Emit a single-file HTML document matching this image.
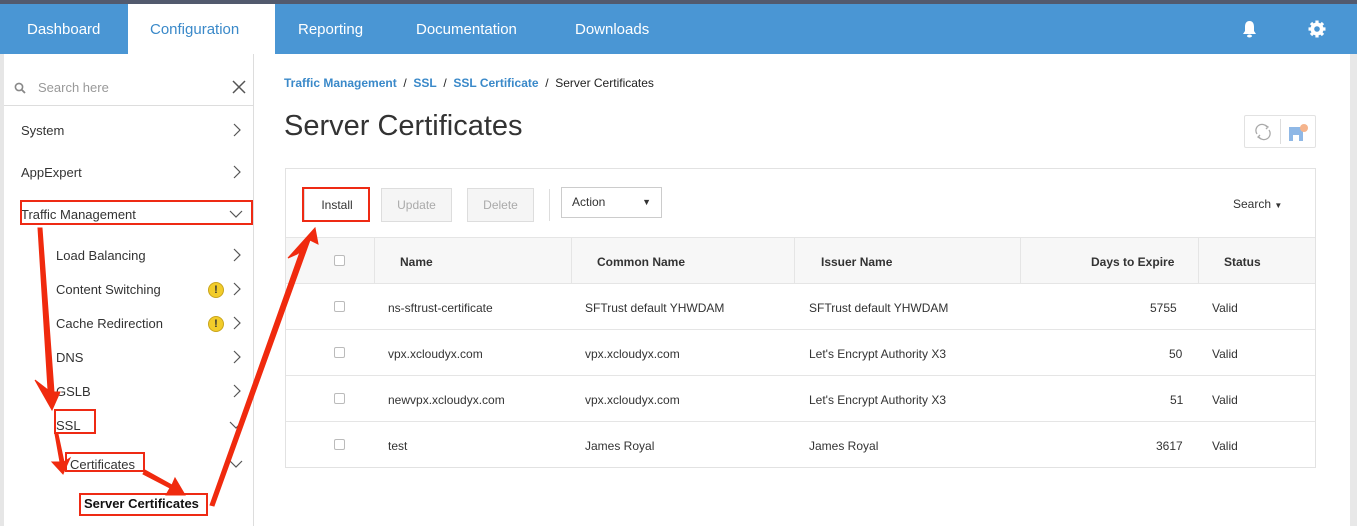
<!DOCTYPE html>
<html><head><style>
*{box-sizing:border-box;margin:0;padding:0}
body{width:1357px;height:526px;overflow:hidden;background:#fff;font-family:"Liberation Sans",sans-serif;position:relative;color:#222}
.top{position:absolute;left:0;top:0;width:1357px;height:4px;background:#525a6e}
.nav{position:absolute;left:0;top:4px;width:1357px;height:50px;background:#4a96d4}
.nav span{position:absolute;top:17px;color:#fff;font-size:15px}
.nav .act{background:#fff;color:#3a89c9;top:0;height:50px;line-height:51px;padding:0 22px;left:128px;width:147px}
.side{position:absolute;left:0;top:54px;width:254px;height:472px;border-right:1px solid #ddd;border-left:4px solid #e6e6e6}
.srch{position:absolute;left:4px;top:70px;width:250px;height:36px;border-bottom:1px solid #ddd;font-size:13px;color:#999}
.it{position:absolute;font-size:13px;color:#333}
.chev{position:absolute}
.warn{position:absolute;width:16px;height:16px;border-radius:50%;background:#f2cc2a;border:1px solid #c9a51c;font-size:11px;font-weight:bold;text-align:center;line-height:14px;color:#333}
.bc{position:absolute;left:284px;top:76px;font-size:12px;color:#222}
.bc b{color:#3a89c9;font-weight:bold}
h1{position:absolute;left:284px;top:110px;font-size:29px;font-weight:normal;color:#333}
.tb{position:absolute;left:285px;top:168px;width:1031px;height:300px;border:1px solid #e2e2e2}
.btn{position:absolute;height:34px;border:1px solid #ddd;background:#f5f5f5;font-size:12px;color:#aaa;text-align:center;line-height:32px}
.hd{position:absolute;left:0;top:68px;width:1029px;height:47px;background:#f7f7f7;border-top:1px solid #e5e5e5;border-bottom:1px solid #e5e5e5;font-size:12px;font-weight:bold;color:#333}
.row{position:absolute;left:0;width:1029px;height:46px;border-bottom:1px solid #e5e5e5;font-size:12px;color:#333}
.row span,.hd span{position:absolute;top:17px}
.cb{position:absolute;left:48px;top:17px;width:11px;height:11px;border:1px solid #bbb;border-radius:2px;background:#fff}
.red{position:absolute;border:2px solid #ee2a14}
</style></head><body>
<svg width="0" height="0" style="position:absolute"><defs>
<symbol id="r" viewBox="0 0 10 14"><path d="M2 1l6 6-6 6" fill="none" stroke="#555" stroke-width="1.2"/></symbol>
<symbol id="d" viewBox="0 0 14 10"><path d="M1 2l6 6 6-6" fill="none" stroke="#555" stroke-width="1.2"/></symbol>
</defs></svg>
<div class="top"></div>
<div class="nav">
<span style="left:27px">Dashboard</span>
<span class="act">Configuration</span>
<span style="left:298px">Reporting</span>
<span style="left:416px">Documentation</span>
<span style="left:575px">Downloads</span>
<svg style="position:absolute;left:1241px;top:16px" width="17" height="18" viewBox="0 0 17 18"><path d="M8.5 1C5 1 4 4 4 7v4L2 14h13l-2-3V7c0-3-1-6-4.5-6z" fill="#fff"/><ellipse cx="8.5" cy="16" rx="2.5" ry="1.5" fill="#fff"/></svg>
<svg style="position:absolute;left:1307px;top:15px" width="20" height="20" viewBox="0 0 20 20"><g stroke="#fff" stroke-width="3.2"><path d="M10 1.5v17M1.5 10h17M4 4l12 12M16 4L4 16"/></g><circle cx="10" cy="10" r="6.5" fill="#fff"/><circle cx="10" cy="10" r="2.8" fill="#4a96d4"/></svg>
</div>
<div style="position:absolute;left:1350px;top:54px;width:7px;height:472px;background:#e8e8e8"></div>
<div class="side"></div>
<div class="srch"><svg style="position:absolute;left:10px;top:12px" width="12" height="12" viewBox="0 0 12 12"><circle cx="5" cy="5" r="3.6" fill="none" stroke="#888" stroke-width="1.6"/><path d="M7.6 7.6l3.4 3.4" stroke="#888" stroke-width="1.8"/></svg><span style="position:absolute;left:34px;top:10px">Search here</span><svg style="position:absolute;left:228px;top:10px" width="14" height="14" viewBox="0 0 14 14"><path d="M1 1l12 12M13 1L1 13" stroke="#555" stroke-width="1.5"/></svg></div>
<div class="it" style="left:21px;top:123px">System</div><svg class="chev" style="left:232px;top:123px" width="10" height="14"><use href="#r"/></svg>
<div class="it" style="left:21px;top:165px">AppExpert</div><svg class="chev" style="left:232px;top:165px" width="10" height="14"><use href="#r"/></svg>
<div class="it" style="left:21px;top:207px">Traffic Management</div><svg class="chev" style="left:229px;top:209px" width="14" height="10"><use href="#d"/></svg>
<div class="it" style="left:56px;top:248px">Load Balancing</div><svg class="chev" style="left:232px;top:248px" width="10" height="14"><use href="#r"/></svg>
<div class="it" style="left:56px;top:282px">Content Switching</div><div class="warn" style="left:208px;top:282px">!</div><svg class="chev" style="left:232px;top:282px" width="10" height="14"><use href="#r"/></svg>
<div class="it" style="left:56px;top:316px">Cache Redirection</div><div class="warn" style="left:208px;top:316px">!</div><svg class="chev" style="left:232px;top:316px" width="10" height="14"><use href="#r"/></svg>
<div class="it" style="left:56px;top:350px">DNS</div><svg class="chev" style="left:232px;top:350px" width="10" height="14"><use href="#r"/></svg>
<div class="it" style="left:56px;top:384px">GSLB</div><svg class="chev" style="left:232px;top:384px" width="10" height="14"><use href="#r"/></svg>
<div class="it" style="left:56px;top:418px">SSL</div><svg class="chev" style="left:229px;top:420px" width="14" height="10"><use href="#d"/></svg>
<div class="it" style="left:70px;top:457px">Certificates</div><svg class="chev" style="left:229px;top:459px" width="14" height="10"><use href="#d"/></svg>
<div class="it" style="left:84px;top:496px;font-weight:bold;color:#111">Server Certificates</div>
<div class="bc"><b>Traffic Management</b> &nbsp;/&nbsp; <b>SSL</b> &nbsp;/&nbsp; <b>SSL Certificate</b> &nbsp;/&nbsp; Server Certificates</div>
<h1>Server Certificates</h1>
<div style="position:absolute;left:1244px;top:115px;width:72px;height:33px;border:1px solid #e2e2e2;border-radius:2px">
<div style="position:absolute;left:35px;top:3px;width:1px;height:25px;background:#ddd"></div>
<svg style="position:absolute;left:8px;top:6px" width="20" height="20" viewBox="0 0 20 20"><path d="M4 12a6 6 0 0 1 10-7M16 8a6 6 0 0 1-10 7" fill="none" stroke="#aaa" stroke-width="1.3"/><path d="M12 3l3 2-2 2M8 17l-3-2 2-2" fill="none" stroke="#aaa" stroke-width="1.3"/></svg>
<svg style="position:absolute;left:43px;top:7px" width="22" height="20" viewBox="0 0 22 20"><rect x="1" y="4" width="14" height="14" fill="#8fb8e6"/><rect x="5" y="12" width="6" height="6" fill="#fff"/><circle cx="16" cy="5" r="4" fill="#f5b48c"/></svg>
</div>
<div class="tb">
<div class="btn" style="left:18px;top:19px;width:66px;color:#333;background:#fff">Install</div>
<div class="btn" style="left:95px;top:19px;width:71px">Update</div>
<div class="btn" style="left:181px;top:19px;width:67px">Delete</div>
<div style="position:absolute;left:263px;top:20px;width:1px;height:32px;background:#ddd"></div>
<div class="btn" style="left:275px;top:18px;width:101px;height:31px;background:#fff;color:#333;text-align:left;padding-left:10px;line-height:29px;border-color:#ccc">Action<span style="position:absolute;right:10px;top:0;font-size:9px">&#9660;</span></div>
<div style="position:absolute;left:947px;top:28px;font-size:12px;color:#333">Search <span style="font-size:8px">&#9660;</span></div>
<div class="hd"><div class="cb"></div>
<span style="left:114px">Name</span><span style="left:311px">Common Name</span><span style="left:535px">Issuer Name</span><span style="left:805px">Days to Expire</span><span style="left:938px">Status</span>
<div style="position:absolute;left:88px;top:0;width:1px;height:45px;background:#e5e5e5"></div>
<div style="position:absolute;left:285px;top:0;width:1px;height:45px;background:#e5e5e5"></div>
<div style="position:absolute;left:508px;top:0;width:1px;height:45px;background:#e5e5e5"></div>
<div style="position:absolute;left:734px;top:0;width:1px;height:45px;background:#e5e5e5"></div>
<div style="position:absolute;left:912px;top:0;width:1px;height:45px;background:#e5e5e5"></div>
</div>
<div class="row" style="top:115px"><div class="cb"></div><span style="left:102px">ns-sftrust-certificate</span><span style="left:299px">SFTrust default YHWDAM</span><span style="left:523px">SFTrust default YHWDAM</span><span style="left:864px">5755</span><span style="left:926px">Valid</span></div>
<div class="row" style="top:161px"><div class="cb"></div><span style="left:102px">vpx.xcloudyx.com</span><span style="left:299px">vpx.xcloudyx.com</span><span style="left:523px">Let's Encrypt Authority X3</span><span style="left:883px">50</span><span style="left:926px">Valid</span></div>
<div class="row" style="top:207px"><div class="cb"></div><span style="left:102px">newvpx.xcloudyx.com</span><span style="left:299px">vpx.xcloudyx.com</span><span style="left:523px">Let's Encrypt Authority X3</span><span style="left:884px">51</span><span style="left:926px">Valid</span></div>
<div class="row" style="top:253px;border-bottom:none"><div class="cb"></div><span style="left:102px">test</span><span style="left:299px">James Royal</span><span style="left:523px">James Royal</span><span style="left:870px">3617</span><span style="left:926px">Valid</span></div>
</div>
<div class="red" style="left:20px;top:200px;width:233px;height:25px"></div>
<div class="red" style="left:54px;top:409px;width:42px;height:25px"></div>
<div class="red" style="left:65px;top:452px;width:80px;height:20px"></div>
<div class="red" style="left:79px;top:493px;width:129px;height:23px"></div>
<div class="red" style="left:302px;top:187px;width:68px;height:35px"></div>
<svg style="position:absolute;left:0;top:0" width="1357" height="526">
<g fill="#f02a0e" stroke="#f02a0e">
<path d="M38 228 L42 228 L54 392 L60 392 L52 410 L35 380 L48 390 Z"/>
<path d="M55 434 L58 434 L64 462 L70 458 L63 474 L52 462 L60 462 Z"/>
<path d="M145 470 L172 485 L175 478 L185 495 L166 495 L170 488 L143 474 Z"/>
<path d="M210 505 L214 506 L310 240 L318 244 L315 228 L288 258 L297 254 L300 252 Z"/>
</g></svg>
</body></html>
